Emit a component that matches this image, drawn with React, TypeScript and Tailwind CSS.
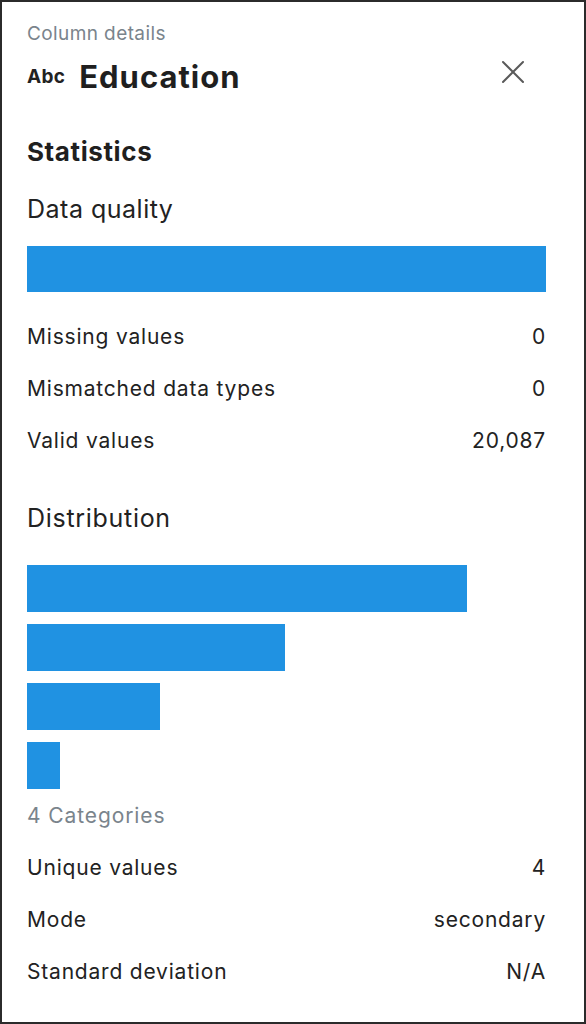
const rowsTop = [
  { label: 'Missing values', value: '0' },
  { label: 'Mismatched data types', value: '0' },
  { label: 'Valid values', value: '20,087' },
];

const rowsBottom = [
  { label: 'Unique values', value: '4' },
  { label: 'Mode', value: 'secondary' },
  { label: 'Standard deviation', value: 'N/A' },
];

const bars = [440, 258, 133, 33];

function StatRow({ label, value }: { label: string; value: string }) {
  return (
    <div className="flex h-[52px] items-center justify-between text-[21px] tracking-[0.8px] text-[#222]">
      <span>{label}</span>
      <span>{value}</span>
    </div>
  );
}

export default function App() {
  return (
    <div
      className="h-[1024px] w-[586px] border-2 border-[#2b2b2b] bg-white"
      style={{ fontFamily: 'Inter, "Noto Sans", sans-serif' }}
    >
      <div className="pl-[25px] pr-[38px] pt-[20px]">
        <p className="text-[19px] leading-[24px] tracking-[0.4px] text-[#7a848c]">Column details</p>

        <div className="mt-[11px] flex h-[40px] items-center justify-between">
          <div className="flex items-center gap-[14px]">
            <span className="text-[19px] font-bold tracking-[0.3px] text-[#222]">Abc</span>
            <span className="text-[31px] font-bold tracking-[1px] text-[#1f1f1f]">Education</span>
          </div>
          <svg
            width="24"
            height="24"
            viewBox="0 0 24 24"
            className="mr-[21px] mt-[-10px]"
            fill="none"
            stroke="#5a5a5a"
            strokeWidth="2"
            strokeLinecap="round"
          >
            <path d="M2 2 L22 22 M22 2 L2 22" />
          </svg>
        </div>

        <h2 className="mt-[39px] text-[26px] font-bold leading-[32px] tracking-[0.6px] text-[#1f1f1f]">Statistics</h2>

        <h3 className="mt-[26px] text-[25px] leading-[30px] tracking-[0.5px] text-[#222]">Data quality</h3>

        <div className="mt-[22px] h-[46px] bg-[#2092e2]" />

        <div className="mt-[19px]">
          {rowsTop.map((r) => (
            <StatRow key={r.label} {...r} />
          ))}
        </div>

        <h3 className="mt-[36px] text-[25px] leading-[30px] tracking-[0.7px] text-[#222]">Distribution</h3>

        <div className="mt-[32px] flex flex-col gap-[12px]">
          {bars.map((w, i) => (
            <div key={i} className="h-[47px] bg-[#2092e2]" style={{ width: w }} />
          ))}
        </div>

        <p className="mt-[14px] text-[21px] leading-[26px] tracking-[0.9px] text-[#7a848c]">4 Categories</p>

        <div className="mt-[13px]">
          {rowsBottom.map((r) => (
            <StatRow key={r.label} {...r} />
          ))}
        </div>
      </div>
    </div>
  );
}
